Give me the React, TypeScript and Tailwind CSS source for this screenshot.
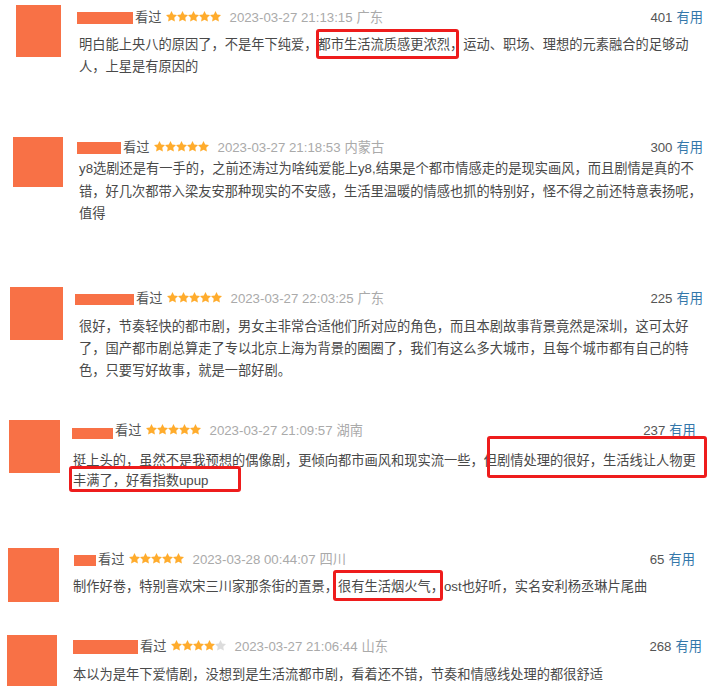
import React from "react";

const FONT = { fontFamily: '"Liberation Sans", "Noto Sans CJK SC", Arial, sans-serif' };

function Stars({ n }: { n: number }) {
  return (
    <span className="inline-flex items-center">
      {[0, 1, 2, 3, 4].map((i) => (
        <svg key={i} width="11" height="11" viewBox="2 2 20 20" className="block">
          <polygon
            points="12,2 15.09,8.26 22,9.27 17,14.14 18.18,21.02 12,17.77 5.82,21.02 7,14.14 2,9.27 8.91,8.26"
            fill={i < n ? "#ffac2d" : "#dcdcdc"}
          />
        </svg>
      ))}
    </span>
  );
}

type R = {
  wrap: string;
  avatar: string;
  content: string;
  header: string;
  name: string;
  text: string;
  lines: string[];
  date: string;
  loc: string;
  count: string;
  stars: number;
};

const reviews: R[] = [
  {
    wrap: "flex h-[130px] pl-[16px] pt-[5px]",
    avatar: "w-[45px] h-[52px]",
    content: "ml-[16px] flex-1 pr-[9px]",
    header: "mt-[4px]",
    name: "w-[56px] h-[12px]",
    text: "mt-[7px] pl-[2px] leading-[22px]",
    lines: [
      "明白能上央八的原因了，不是年下纯爱，都市生活流质感更浓烈，运动、职场、理想的元素融合的足够动",
      "人，上星是有原因的",
    ],
    date: "2023-03-27 21:13:15",
    loc: "广东",
    count: "401",
    stars: 5,
  },
  {
    wrap: "flex h-[150px] pl-[13px] pt-[7px]",
    avatar: "w-[50px] h-[50px]",
    content: "ml-[14px] flex-1 pr-[9px]",
    header: "mt-[2px]",
    name: "w-[44px] h-[12px]",
    text: "mt-[1px] pl-[2px] leading-[22.5px]",
    lines: [
      "y8选剧还是有一手的，之前还涛过为啥纯爱能上y8,结果是个都市情感走的是现实画风，而且剧情是真的不",
      "错，好几次都带入梁友安那种现实的不安感，生活里温暖的情感也抓的特别好，怪不得之前还特意表扬呢，",
      "值得",
    ],
    date: "2023-03-27 21:18:53",
    loc: "内蒙古",
    count: "300",
    stars: 5,
  },
  {
    wrap: "flex h-[130px] pl-[10px] pt-[7px]",
    avatar: "w-[53px] h-[53px]",
    content: "ml-[12px] flex-1 pr-[9px]",
    header: "mt-[3px]",
    name: "w-[59px] h-[11px]",
    text: "mt-[8px] pl-[4px] leading-[22px]",
    lines: [
      "很好，节奏轻快的都市剧，男女主非常合适他们所对应的角色，而且本剧故事背景竟然是深圳，这可太好",
      "了，国产都市剧总算走了专以北京上海为背景的圈圈了，我们有这么多大城市，且每个城市都有自己的特",
      "色，只要写好故事，就是一部好剧。",
    ],
    date: "2023-03-27 22:03:25",
    loc: "广东",
    count: "225",
    stars: 5,
  },
  {
    wrap: "flex h-[120px] pl-[9px] pt-[10px]",
    avatar: "w-[51px] h-[53px]",
    content: "ml-[12px] flex-1 pr-[17px]",
    header: "mt-[2px]",
    name: "w-[41px] h-[11px] mt-[4px]",
    text: "mt-[11px] pl-[1px] leading-[20px]",
    lines: [
      "挺上头的，虽然不是我预想的偶像剧，更倾向都市画风和现实流一些，但剧情处理的很好，生活线让人物更",
      "丰满了，好看指数upup",
    ],
    date: "2023-03-27 21:09:57",
    loc: "湖南",
    count: "237",
    stars: 5,
  },
  {
    wrap: "flex h-[90px] pl-[8px] pt-[18px]",
    avatar: "w-[51px] h-[54px]",
    content: "ml-[15px] flex-1 pr-[17px]",
    header: "mt-[3px]",
    name: "w-[22px] h-[11px]",
    text: "mt-[7px] -ml-[1px] leading-[22px]",
    lines: ["制作好卷，特别喜欢宋三川家那条街的置景，很有生活烟火气，ost也好听，实名安利杨丞琳片尾曲"],
    date: "2023-03-28 00:44:07",
    loc: "四川",
    count: "65",
    stars: 5,
  },
  {
    wrap: "flex h-[76px] pl-[7px] pt-[15px]",
    avatar: "w-[50px] h-[51px]",
    content: "ml-[16px] flex-1 pr-[10px]",
    header: "mt-[3px]",
    name: "w-[65px] h-[14px]",
    text: "mt-[8px] leading-[22px]",
    lines: ["本以为是年下爱情剧，没想到是生活流都市剧，看着还不错，节奏和情感线处理的都很舒适"],
    date: "2023-03-27 21:06:44",
    loc: "山东",
    count: "268",
    stars: 4,
  },
];

function Review({ r }: { r: R }) {
  return (
    <div className={r.wrap}>
      <div className={"shrink-0 bg-[#f87146] " + r.avatar} />
      <div className={r.content}>
        <div className={"flex h-[18px] items-center text-[13.25px] leading-[18px] " + r.header}>
          <span className={"shrink-0 bg-[#f87146] " + r.name} />
          <span className="ml-[2px] text-[#555]">看过</span>
          <span className="ml-[4px]">
            <Stars n={r.stars} />
          </span>
          <span className="ml-[9px] text-[#aaa]">{r.date}</span>
          <span className="ml-[4px] text-[#aaa]">{r.loc}</span>
          <span className="ml-auto text-[#555]">{r.count}</span>
          <span className="ml-[4px] text-[#3377aa]">有用</span>
        </div>
        <div className={"text-[13.25px] text-[#494949] " + r.text}>
          {r.lines.map((l, i) => (
            <div key={i} className="whitespace-nowrap">
              {l}
            </div>
          ))}
        </div>
      </div>
    </div>
  );
}

export default function App() {
  return (
    <div className="relative h-[696px] w-[712px] overflow-hidden bg-white" style={FONT}>
      {reviews.map((r, i) => (
        <Review key={i} r={r} />
      ))}
      <div className="pointer-events-none absolute left-[316px] top-[29px] h-[30px] w-[143px] rounded-[3px] border-[3px] border-[#ee1c1c]" />
      <div className="pointer-events-none absolute left-[487px] top-[436px] h-[42px] w-[220px] rounded-[3px] border-[3px] border-[#ee1c1c]" />
      <div className="pointer-events-none absolute left-[69px] top-[466px] h-[26px] w-[172px] rounded-[3px] border-[3px] border-[#ee1c1c]" />
      <div className="pointer-events-none absolute left-[333px] top-[570px] h-[31px] w-[110px] rounded-[3px] border-[3px] border-[#ee1c1c]" />
    </div>
  );
}
